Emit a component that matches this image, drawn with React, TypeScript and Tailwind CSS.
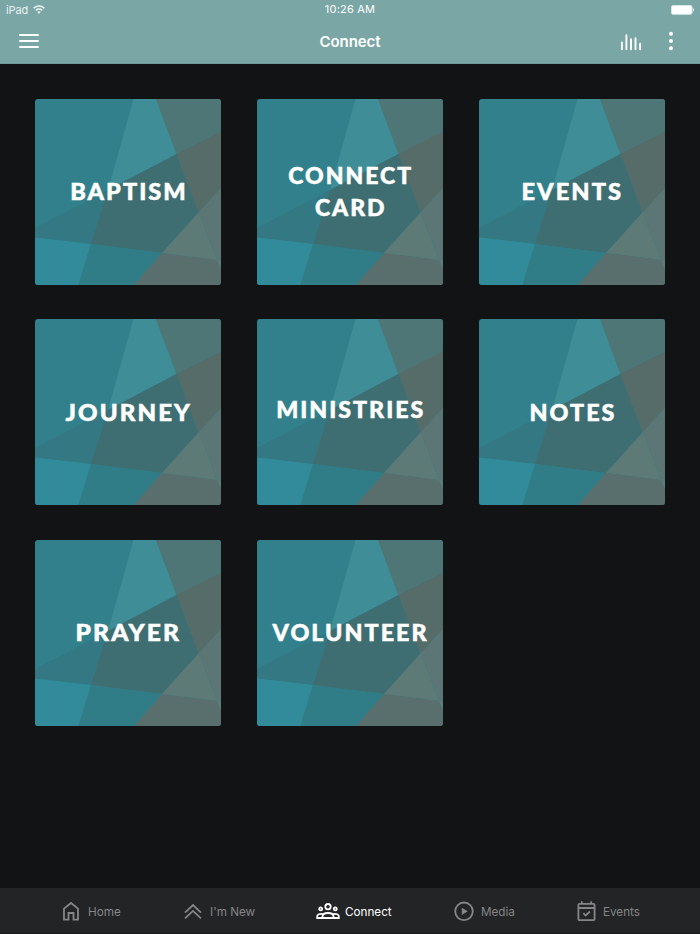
import { type ReactNode } from 'react';

const tiles = [
  { lines: ['BAPTISM'], className: 'scale-x-[1.07]' },
  { lines: ['CONNECT', 'CARD'], className: 'scale-x-[1.045] pt-px' },
  { lines: ['EVENTS'], className: 'scale-x-[1.075]' },
  { lines: ['JOURNEY'], className: 'scale-x-[1.095] pt-px' },
  { lines: ['MINISTRIES'], className: 'scale-x-[1.055] pb-[4px]' },
  { lines: ['NOTES'], className: 'scale-x-[1.06] pt-px' },
  { lines: ['PRAYER'], className: 'scale-x-[1.115]' },
  { lines: ['VOLUNTEER'], className: 'scale-x-[1.06]' },
];

function TileArt() {
  return (
    <svg viewBox="0 0 186 186" className="absolute inset-0 h-full w-full" aria-hidden="true">
      <rect width="186" height="186" fill="#32808c" />
      <path d="M98.5 0H121L141.5 55L73 91Z" fill="#3f8d96" />
      <path d="M121 0H186V32.5L141.5 55Z" fill="#4f7677" />
      <path d="M141.5 55L186 32.5V89L163.5 113.5Z" fill="#566c69" />
      <path d="M0 129L73 91L56 145L0 138.5Z" fill="#337882" />
      <path d="M73 91L141.5 55L163.5 113.5L127 154L56 145Z" fill="#3e6e71" />
      <path d="M0 138.5L56 145L43.5 186H0Z" fill="#328b9a" />
      <path d="M56 145L127 154L99 186H43.5Z" fill="#317d87" />
      <path d="M127 154L163.5 113.5L182 161Z" fill="#5d7a77" />
      <path d="M163.5 113.5L186 89V170Z" fill="#5b7674" />
      <path d="M127 154L182 161L186 170V186H99Z" fill="#596f6e" />
      <path d="M182 161L186 162V170Z" fill="#5d7d7a" />
    </svg>
  );
}

function TabIcon({ viewBox, className, children }: { viewBox: string; className: string; children: ReactNode }) {
  return (
    <svg viewBox={viewBox} fill="none" stroke="currentColor" strokeWidth="1.8" className={`h-5 shrink-0 ${className}`}>
      {children}
    </svg>
  );
}

const tabs = [
  {
    label: 'Home',
    className: 'w-[59px] gap-2',
    icon: (
      <TabIcon viewBox="0 0 18 20" className="w-[18px]">
        <path d="M2 18.6V7.6L9 2L16 7.6V18.6H11.5V12H6.5V18.6Z" />
      </TabIcon>
    ),
  },
  {
    label: "I'm New",
    className: 'w-[69px] gap-2',
    icon: (
      <TabIcon viewBox="0 0 18 20" className="w-[18px]">
        <path d="M1 11.6L9 4.1L17 11.6M1 17.4L9 9.9L17 17.4" />
      </TabIcon>
    ),
  },
  {
    label: 'Connect',
    className: 'w-[75px] gap-[5px]',
    icon: (
      <TabIcon viewBox="0 0 24 20" className="w-6">
        <circle cx="12" cy="5.7" r="2.7" />
        <circle cx="4.7" cy="7.9" r="1.5" />
        <circle cx="19.3" cy="7.9" r="1.5" />
        <path d="M6.5 17V15.5C6.5 13 9 12 12 12S17.5 13 17.5 15.5V17Z" />
        <path d="M6.5 17H1.2V15.3C1.2 13.3 3.5 12.6 6.7 13M17.5 17H22.8V15.3C22.8 13.3 20.5 12.6 17.3 13" />
      </TabIcon>
    ),
  },
  {
    label: 'Media',
    className: 'w-[60px] gap-[7px]',
    icon: (
      <TabIcon viewBox="0 0 20 20" className="w-5">
        <circle cx="10" cy="10.3" r="8.8" />
        <path d="M7.8 6.7L13.8 10.3L7.8 13.9Z" fill="currentColor" stroke="none" />
      </TabIcon>
    ),
  },
  {
    label: 'Events',
    className: 'w-[63px] gap-[7px]',
    icon: (
      <TabIcon viewBox="0 0 19 20" className="w-[19px]">
        <rect x="1.4" y="2.9" width="16.2" height="16.2" rx="1.2" />
        <path d="M4.8 0.3V3M14.2 0.3V3M1.4 7H17.6M6.3 12.2L8.7 14.5L12.9 10.5" />
      </TabIcon>
    ),
  },
];

function StatusBar() {
  return (
    <div className="grid h-[19px] grid-cols-3 items-center px-[6px] text-[11px] leading-none">
      <div className="flex items-center gap-[5px] text-[#e9f3f1]">
        <span className="pt-px tracking-[-0.1px]">iPad</span>
        <svg viewBox="0 0 12 9" fill="none" stroke="currentColor" strokeWidth="1.6" className="h-[9px] w-3">
          <path d="M0.7 3.2C3.7 0.2 8.3 0.2 11.3 3.2M2.8 5.3C4.6 3.6 7.4 3.6 9.2 5.3" />
          <path d="M4.1 6.9C5.2 5.9 6.8 5.9 7.9 6.9L6 8.8Z" fill="currentColor" stroke="none" />
        </svg>
      </div>
      <div className="text-center tracking-[0.2px] text-white">10:26 AM</div>
      <svg viewBox="0 0 23 10" className="h-[10px] w-[23px] justify-self-end">
        <rect x="0.5" y="0.5" width="20.5" height="8.8" rx="1.5" fill="white" stroke="#d5e5e3" />
        <path d="M21.8 3C23.2 3.6 23.2 6.2 21.8 6.8Z" fill="#e9f3f1" />
      </svg>
    </div>
  );
}

export default function App() {
  return (
    <div className="flex h-[934px] w-[700px] flex-col overflow-hidden bg-[#111314] font-['Inter',sans-serif]">
      <header className="h-16 shrink-0 border-b border-[#6f9b9b] bg-[#7aa6a5] text-white">
        <StatusBar />
        <div className="grid h-[44px] grid-cols-3 items-center pr-[26px] pl-[19px]">
          <button type="button" aria-label="Menu" className="flex w-5 flex-col gap-[4px]">
            <span className="h-[2px] rounded-full bg-white" />
            <span className="h-[2px] rounded-full bg-white" />
            <span className="h-[2px] rounded-full bg-white" />
          </button>
          <h1 className="pt-[2px] pl-[7px] text-center text-[15px] font-semibold tracking-[-0.1px]">Connect</h1>
          <div className="flex items-center justify-end gap-[26px]">
            <svg viewBox="0 0 22 17" stroke="currentColor" strokeWidth="1.9" strokeLinecap="round" className="mt-[2px] h-[17px] w-[22px]">
              <path d="M1.9 8.5V15.3M6.4 1.3V15.3M11 5.3V15.3M15.5 4.3V15.3M20.1 9.8V15.3" />
            </svg>
            <svg viewBox="0 0 6 20" fill="currentColor" className="h-5 w-[6px]">
              <circle cx="3" cy="2.7" r="2" />
              <circle cx="3" cy="10" r="2" />
              <circle cx="3" cy="17.3" r="2" />
            </svg>
          </div>
        </div>
      </header>

      <main className="flex-1 px-[35px] pt-[34.5px]">
        <div className="grid grid-cols-[186px_186px_186px] justify-between gap-y-[34.7px]">
          {tiles.map((tile) => (
            <button
              key={tile.lines[0]}
              type="button"
              className="relative flex h-[186px] items-center justify-center overflow-hidden rounded-[3px]"
            >
              <TileArt />
              <span
                className={`relative pl-px font-['Lato',sans-serif] text-[22px] leading-8 font-black tracking-[1.9px] whitespace-nowrap text-white [-webkit-text-stroke:0.5px_white] ${tile.className}`}
              >
                {tile.lines.map((line) => (
                  <span key={line} className="block">
                    {line}
                  </span>
                ))}
              </span>
            </button>
          ))}
        </div>
      </main>

      <nav className="flex h-[46px] shrink-0 items-center justify-between border-b border-[#191a1c] bg-[#232426] pt-px pr-[60px] pl-[62px]">
        {tabs.map((tab) => (
          <button
            key={tab.label}
            type="button"
            className={`flex items-center text-[11.7px] whitespace-nowrap ${tab.className} ${
              tab.label === 'Connect' ? 'text-white' : 'text-[#858687]'
            }`}
          >
            {tab.icon}
            <span className="pt-[3px]">{tab.label}</span>
          </button>
        ))}
      </nav>
    </div>
  );
}
